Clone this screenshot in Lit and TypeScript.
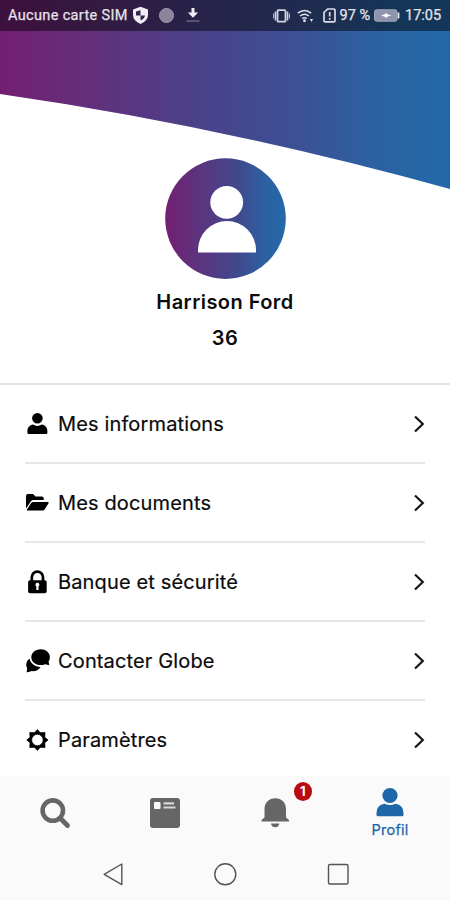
import { LitElement, html, css, svg } from "lit";
import { customElement } from "lit/decorators.js";

const icons = {
  user: svg`<circle cx="12.400" cy="6.300" r="5.300"/><path d="M2.400 20.800v-1.400c0-3.900 2.300-6.200 5.600-6.800 2.800 1.700 6 1.700 8.800 0 3.300.6 5.600 2.900 5.600 6.800v1.400q0 1.200-1.200 1.200H3.600q-1.200 0-1.200-1.200z"/>`,
  folder: svg`<path d="M1 5q0-1.900 1.900-1.900h5.200l2.400 2.300h6.300q1.900 0 1.900 1.900v1.800H8.400q-1.700 0-2.600 1.400L1 17.500z"/><path d="M8.400 11h14.400q1.500 0 .7 1.300l-3.700 6q-.8 1.300-2.400 1.300H2.600q-1.300 0-.6-1.200L6 12.200q.8-1.200 2.400-1.200z"/>`,
  lock: svg`<path d="M6.800 11.500V7.200a5.600 5.600 0 0 1 11.200 0v4.300" fill="none" stroke="currentColor" stroke-width="2.700"/><path fill-rule="evenodd" d="M5 10.200h14.800q1.900 0 1.900 1.900v9.200q0 2-1.900 2H5q-1.900 0-1.900-2v-9.200q0-1.900 1.900-1.900zM12.400 12.800a1.900 1.900 0 0 0-1.100 3.500v3.800h2.200v-3.800a1.900 1.900 0 0 0-1.100-3.500z"/>`,
  chat: svg`<path d="M15.600 .2c5.200 0 9.300 3.500 9.300 8 0 1.700-.6 3.200-1.300 4.300l.7 3.800-4.200-1.100c-1.300.6-2.900.9-4.500.9-5.200 0-9.300-3.500-9.300-7.900s4.100-8 9.300-8z"/><path d="M4.600 9.700c.9 4.600 5.200 7.900 10.900 8.200-1.700 3-5.200 4.700-9 4.200-1.500.9-3 1.200-4.900 1.100l.6-3.800C.4 15.700 1.300 11.600 4.600 9.700z"/>`,
  gear: svg`<path fill-rule="evenodd" stroke="currentColor" stroke-width=".6" stroke-linejoin="round" d="M12.400 1.400l2.700 3.200 5-.2-.3 4.800 3.300 2.800-3.300 2.800.3 4.800-5-.2-2.700 3.200-2.700-3.200-5 .2.300-4.800L1.700 12 5 9.200l-.3-4.800 5 .2zM12.400 6.300a5.700 5.700 0 1 0 0 11.400 5.700 5.700 0 0 0 0-11.400z"/>`,
};

const rows = [
  { label: "Mes informations", icon: icons.user },
  { label: "Mes documents", icon: icons.folder },
  { label: "Banque et sécurité", icon: icons.lock },
  { label: "Contacter Globe", icon: icons.chat },
  { label: "Paramètres", icon: icons.gear },
];

@customElement("app-root")
export class AppRoot extends LitElement {
  static styles = css`
    :host {
      display: flex;
      flex-direction: column;
      width: 450px;
      height: 900px;
      overflow: hidden;
      background: #fff;
      color: #0b0b0d;
      font-family: Inter, "Liberation Sans", sans-serif;
    }
    * { box-sizing: border-box; }
    svg { display: block; flex: none; }
    .profile {
      position: relative;
      flex: none;
      height: 385px;
      border-bottom: 2px solid #e3e3e4;
      display: flex;
      flex-direction: column;
      align-items: center;
    }
    .wave { position: absolute; left: 0; top: 0; }
    .status {
      position: relative;
      width: 100%;
      height: 30.500px;
      padding: 1px 9px 0 8px;
      display: flex;
      align-items: center;
      background: rgba(0, 0, 0, 0.47);
      color: #e6e3ea;
      font: 400 14.500px/30px Roboto, sans-serif;
      -webkit-text-stroke: 0.250px;
      white-space: nowrap;
    }
    .carrier { width: 119px; letter-spacing: 0.340px; }
    .spacer { flex: 1; }
    .shield { margin-left: 5px; }
    .disc { width: 15px; height: 15px; margin: 0 11.500px 0 10px; border-radius: 50%; background: #8d829b; border: 1px solid #a197ad; }
    .wifi { margin: 0 9px 0 7px; }
    .percent { margin-left: 4px; width: 31px; letter-spacing: 0; }
    .battery { margin: 0 5px 0 3.500px; }
    .clock { width: 36px; }
    .avatar { position: relative; margin-top: 127.500px; }
    .name { margin-top: 10px; font-size: 20px; line-height: 26px; font-weight: 600; letter-spacing: 0.450px; }
    .number { margin-top: 10px; font-size: 20px; line-height: 26px; font-weight: 600; letter-spacing: 0.500px; }
    .menu { flex: 1; padding: 0 25px; min-height: 0; }
    .row {
      height: 79.100px;
      padding-top: 1px;
      display: flex;
      align-items: center;
      border-bottom: 2px solid #e6e6e7;
    }
    .row:last-child { border-bottom-color: transparent; }
    .row-icon { color: #000; fill: currentColor; }
    .label { flex: 1; margin-left: 8px; font-size: 20px; line-height: 28px; letter-spacing: 0.140px; -webkit-text-stroke: 0.200px; }
    .tabs {
      flex: none;
      height: 72px;
      background: #fafafa;
      display: grid;
      grid-template-columns: repeat(3, 110px) 120px;
      color: #666;
    }
    .tab { position: relative; display: flex; flex-direction: column; align-items: center; padding-top: 21px; }
    .tab.active { color: #1d66a8; padding-top: 11px; }
    .tab-label { font-size: 14.500px; line-height: 18px; margin-top: 4px; letter-spacing: 0.200px; -webkit-text-stroke: 0.250px; }
    .badge {
      position: absolute;
      left: 73.500px;
      top: 6px;
      width: 18.500px;
      height: 19px;
      border-radius: 50%;
      background: #b90b10;
      color: #fff;
      font: 700 13px/19px Inter, sans-serif;
      text-align: center;
    }
    .system {
      flex: none;
      height: 52px;
      background: #fafafa;
      display: grid;
      grid-template-columns: repeat(3, 112.500px);
      justify-content: center;
      justify-items: center;
      padding-top: 14px;
      fill: none;
      stroke: #535353;
      stroke-width: 1.400;
    }
  `;

  render() {
    return html`
      <section class="profile">
        <svg class="wave" width="450" height="190" viewBox="0 0 450 190">
          <defs>
            <linearGradient id="g">
              <stop offset="0" stop-color="#731f72"/>
              <stop offset=".2" stop-color="#63307b"/>
              <stop offset=".42" stop-color="#4c4088"/>
              <stop offset=".65" stop-color="#3d5094"/>
              <stop offset=".82" stop-color="#2d60a1"/>
              <stop offset="1" stop-color="#2269a8"/>
            </linearGradient>
          </defs>
          <path d="M0 0H450V189Q225 126.500 0 94z" fill="url(#g)"/>
        </svg>
        <header class="status">
          <span class="carrier">Aucune carte SIM</span>
          <svg class="shield" width="17" height="19" viewBox="0 0 17 19">
            <path d="M8.500 .8L16 3.400v5.300q0 6-7.500 9.300Q1 14.700 1 8.700V3.400z" fill="#f1eef3"/>
            <path d="M8.500 4.200v5.200H4V5.600zM8.500 9.400H13q-.5 3.200-4.500 5.200z" fill="#33264c"/>
          </svg>
          <span class="disc"></span>
          <svg width="14" height="15" viewBox="0 0 14 15">
            <path d="M5.500 0h3v4.500h3.700L7 9.800 1.800 4.500h3.700z" fill="#f1eef3"/>
            <path d="M.5 13h13" stroke="#686080" stroke-width="1.600"/>
          </svg>
          <span class="spacer"></span>
          <svg width="17" height="14" viewBox="0 0 17 14" fill="none" stroke="#d5d3df">
            <rect x="4.500" y="1.200" width="8" height="11.500" rx="1" stroke-width="1.800"/>
            <path d="M2.500 2.500v9M14.500 2.500v9" stroke-width="1.500"/><path d="M.7 4.500v5M16.300 4.500v5" stroke-width="1"/>
          </svg>
          <svg class="wifi" width="17" height="14" viewBox="0 0 17 14" fill="none" stroke="#dedce6" stroke-width="1.500">
            <path d="M.8 4.200Q7.500-1.300 14.200 4.200M3 7q4.500-3.500 9 0M5.200 9.500q2.300-1.600 4.600 0"/>
            <circle cx="7.500" cy="11.700" r=".7" fill="#dedce6"/><path d="M12.800 10l1.700 3 1.500-3z" fill="#dedce6" stroke="none"/>
          </svg>
          <svg width="13" height="15" viewBox="0 0 13 15" fill="none" stroke="#dedce6" stroke-width="1.700">
            <path d="M1 4.500v8.200q0 1.200 1.200 1.200h8.600q1.200 0 1.200-1.200V2.200Q12 1 10.800 1H4.600z"/>
            <path d="M6.700 4v4.500M6.700 10v1.800"/>
          </svg>
          <span class="percent">97 %</span>
          <svg class="battery" width="26" height="13" viewBox="0 0 26 13">
            <rect x=".5" y=".8" width="22.500" height="11.400" rx="2" fill="#8e93ae" stroke="#a2a7be"/>
            <path d="M24.500 3.500v6" stroke="#e5e5ec" stroke-width="1.800"/>
            <path d="M7 6.500l4-1.200 1-1.500 1.200 1.500 4 1.200-4 1.200-1.200 1.500-1-1.500z" fill="#fff"/>
          </svg>
          <span class="clock">17:05</span>
        </header>
        <svg class="avatar" width="121" height="121" viewBox="0 0 121 121">
          <defs>
            <linearGradient id="a">
              <stop offset="0" stop-color="#731f72"/>
              <stop offset=".3" stop-color="#5b357f"/>
              <stop offset=".6" stop-color="#40498d"/>
              <stop offset=".82" stop-color="#2d60a1"/>
              <stop offset="1" stop-color="#2269a8"/>
            </linearGradient>
          </defs>
          <circle cx="60.500" cy="60.600" r="60.300" fill="url(#a)"/>
          <circle cx="61.700" cy="44.300" r="16.400" fill="#fff"/>
          <path d="M33 94.600V92a29 29 0 0 1 58 0v2.600z" fill="#fff"/>
        </svg>
        <div class="name">Harrison Ford</div>
        <div class="number">36</div>
      </section>
      <nav class="menu">
        ${rows.map((r) => html`
          <div class="row">
            <svg class="row-icon" width="25" height="25" viewBox="0 0 25 25">${r.icon}</svg>
            <span class="label">${r.label}</span>
            <svg width="12" height="18" viewBox="0 0 12 18" fill="none" stroke="#17171a" stroke-width="2.200">
              <path d="M2 1.500L9.800 9 2 16.500"/>
            </svg>
          </div>`)}
      </nav>
      <div class="tabs">
        <div class="tab">
          <svg width="32" height="32" viewBox="0 0 32 32" fill="none" stroke="currentColor">
            <circle cx="13.800" cy="13.600" r="10.200" stroke-width="4.600"/>
            <path d="M21 21l7.500 7.500" stroke-width="4.800" stroke-linecap="round"/>
          </svg>
        </div>
        <div class="tab">
          <svg width="32" height="32" viewBox="0 0 32 32">
            <rect x="1" y="1" width="30" height="30" rx="3" fill="currentColor"/>
            <rect x="5" y="5" width="6.500" height="7" rx="1" fill="#fafafa"/>
            <path d="M14.500 6.300h10.500M14.500 10.500h12" stroke="#d8d8d8" stroke-width="2.200"/>
          </svg>
        </div>
        <div class="tab">
          <svg width="32" height="32" viewBox="0 0 32 32" fill="currentColor">
            <path d="M5.500 20.500V12C5.500 5.500 10 1.300 16.300 1.300S27 5.500 27 12v8.500l3 2.500v1.500H2.500V23z"/>
            <path d="M12 26.500h8.300Q20 30.200 16.200 30.200T12 26.500z"/>
          </svg>
          <span class="badge">1</span>
        </div>
        <div class="tab active">
          <svg width="30" height="30" viewBox="0 0 30 30" fill="currentColor">
            <circle cx="15" cy="8.500" r="7.600"/>
            <path d="M1.500 27.700V26q0-8 8-9.200 5.500 2.500 11 0 8 1.200 8 9.200v1.700q0 1.600-1.500 1.600H3q-1.500 0-1.500-1.600z"/>
          </svg>
          <span class="tab-label">Profil</span>
        </div>
      </div>
      <footer class="system">
        <svg width="24" height="24" viewBox="0 0 24 24"><path d="M3.200 12.300L20.800 2v20.600z" stroke-linejoin="round"/></svg>
        <svg width="24" height="24" viewBox="0 0 24 24"><circle cx="12.300" cy="12.300" r="10.500"/></svg>
        <svg width="24" height="24" viewBox="0 0 24 24"><rect x="2.500" y="2.500" width="19.500" height="19.500" rx="1.500"/></svg>
      </footer>
    `;
  }
}
